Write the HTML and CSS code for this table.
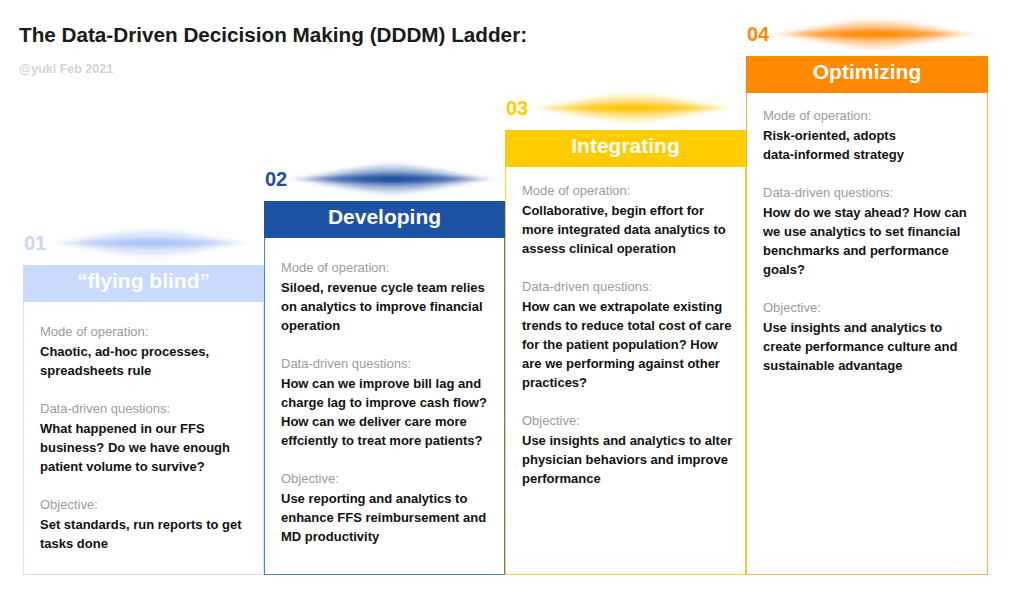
FILE: index.html
```html
<!DOCTYPE html>
<html>
<head>
<meta charset="utf-8">
<link rel="stylesheet" href="styles.css">
</head>
<body>
<svg class="defs" width="0" height="0" aria-hidden="true">
  <defs>
    <filter id="soft" x="-10%" y="-50%" width="120%" height="200%"><feGaussianBlur stdDeviation="1.4"/></filter>
    <filter id="softer" x="-10%" y="-50%" width="120%" height="200%"><feGaussianBlur stdDeviation="2.5"/></filter>
    <radialGradient id="g1"><stop offset="0" stop-color="#a9c2f5" stop-opacity="1"/><stop offset="0.5" stop-color="#a9c2f5" stop-opacity="0.6"/><stop offset="1" stop-color="#a9c2f5" stop-opacity="0"/></radialGradient>
    <radialGradient id="g2"><stop offset="0" stop-color="#16489c" stop-opacity="1"/><stop offset="0.5" stop-color="#16489c" stop-opacity="0.6"/><stop offset="1" stop-color="#16489c" stop-opacity="0"/></radialGradient>
    <radialGradient id="g3"><stop offset="0" stop-color="#ffc400" stop-opacity="1"/><stop offset="0.5" stop-color="#ffc400" stop-opacity="0.6"/><stop offset="1" stop-color="#ffc400" stop-opacity="0"/></radialGradient>
    <radialGradient id="g4"><stop offset="0" stop-color="#ff8400" stop-opacity="1"/><stop offset="0.5" stop-color="#ff8400" stop-opacity="0.6"/><stop offset="1" stop-color="#ff8400" stop-opacity="0"/></radialGradient>
  </defs>
</svg>
<div class="page">
  <header class="intro">
    <h1 class="title">The Data-Driven Decicision Making (DDDM) Ladder:</h1>
    <div class="byline">@yuki Feb 2021</div>
  </header>

  <main class="ladder">
    <section class="step step-1">
      <div class="step-top">
        <span class="num">01</span>
        <svg class="glow" viewBox="0 0 224 44" width="224" height="44"><polygon points="12,22 112,6 212,22 112,38" fill="url(#g1)" opacity="0.75" filter="url(#softer)"/><polygon points="0,22 112,16 224,22 112,28" fill="url(#g1)" filter="url(#soft)"/></svg>
      </div>
      <div class="head">“flying blind”</div>
      <div class="body">
        <div class="sec"><div class="lbl">Mode of operation:</div><p class="txt">Chaotic, ad-hoc processes,<br>spreadsheets rule</p></div>
        <div class="sec"><div class="lbl">Data-driven questions:</div><p class="txt">What happened in our FFS<br>business? Do we have enough<br>patient volume to survive?</p></div>
        <div class="sec"><div class="lbl">Objective:</div><p class="txt">Set standards, run reports to get<br>tasks done</p></div>
      </div>
    </section>

    <section class="step step-2">
      <div class="step-top">
        <span class="num">02</span>
        <svg class="glow" viewBox="0 0 224 44" width="224" height="44"><polygon points="12,22 112,6 212,22 112,38" fill="url(#g2)" opacity="0.75" filter="url(#softer)"/><polygon points="0,22 112,16 224,22 112,28" fill="url(#g2)" filter="url(#soft)"/></svg>
      </div>
      <div class="head">Developing</div>
      <div class="body">
        <div class="sec"><div class="lbl">Mode of operation:</div><p class="txt">Siloed, revenue cycle team relies<br>on analytics to improve financial<br>operation</p></div>
        <div class="sec"><div class="lbl">Data-driven questions:</div><p class="txt">How can we improve bill lag and<br>charge lag to improve cash flow?<br>How can we deliver care more<br>effciently to treat more patients?</p></div>
        <div class="sec"><div class="lbl">Objective:</div><p class="txt">Use reporting and analytics to<br>enhance FFS reimbursement and<br>MD productivity</p></div>
      </div>
    </section>

    <section class="step step-3">
      <div class="step-top">
        <span class="num">03</span>
        <svg class="glow" viewBox="0 0 224 44" width="224" height="44"><polygon points="12,22 112,6 212,22 112,38" fill="url(#g3)" opacity="0.75" filter="url(#softer)"/><polygon points="0,22 112,16 224,22 112,28" fill="url(#g3)" filter="url(#soft)"/></svg>
      </div>
      <div class="head">Integrating</div>
      <div class="body">
        <div class="sec"><div class="lbl">Mode of operation:</div><p class="txt">Collaborative, begin effort for<br>more integrated data analytics to<br>assess clinical operation</p></div>
        <div class="sec"><div class="lbl">Data-driven questions:</div><p class="txt">How can we extrapolate existing<br>trends to reduce total cost of care<br>for the patient population? How<br>are we performing against other<br>practices?</p></div>
        <div class="sec"><div class="lbl">Objective:</div><p class="txt">Use insights and analytics to alter<br>physician behaviors and improve<br>performance</p></div>
      </div>
    </section>

    <section class="step step-4">
      <div class="step-top">
        <span class="num">04</span>
        <svg class="glow" viewBox="0 0 224 44" width="224" height="44"><polygon points="12,22 112,6 212,22 112,38" fill="url(#g4)" opacity="0.75" filter="url(#softer)"/><polygon points="0,22 112,16 224,22 112,28" fill="url(#g4)" filter="url(#soft)"/></svg>
      </div>
      <div class="head">Optimizing</div>
      <div class="body">
        <div class="sec"><div class="lbl">Mode of operation:</div><p class="txt">Risk-oriented, adopts<br>data-informed strategy</p></div>
        <div class="sec"><div class="lbl">Data-driven questions:</div><p class="txt">How do we stay ahead? How can<br>we use analytics to set financial<br>benchmarks and performance<br>goals?</p></div>
        <div class="sec"><div class="lbl">Objective:</div><p class="txt">Use insights and analytics to<br>create performance culture and<br>sustainable advantage</p></div>
      </div>
    </section>
  </main>
</div>
</body>
</html>
```

FILE: styles.css
```css
* { box-sizing: border-box; }

html, body {
  margin: 0;
  padding: 0;
  background: #ffffff;
}

body {
  font-family: "Liberation Sans", Arial, sans-serif;
  color: #111111;
  width: 1030px;
  height: 595px;
  overflow: hidden;
}

.defs {
  position: absolute;
  width: 0;
  height: 0;
}

.page {
  display: grid;
  width: 1030px;
  height: 595px;
}

.intro,
.ladder {
  grid-area: 1 / 1;
}

.intro {
  align-self: start;
  padding: 22px 0 0 19px;
}

.title {
  margin: 0;
  font-size: 20.7px;
  line-height: 25px;
  font-weight: bold;
  color: #1a1a1a;
}

.byline {
  margin-top: 15px;
  font-size: 12.5px;
  line-height: 14px;
  font-weight: bold;
  color: #d4d4d4;
}

.ladder {
  align-self: end;
  display: flex;
  align-items: flex-end;
  padding: 0 0 20px 23px;
}

.step {
  width: 241px;
  display: flex;
  flex-direction: column;
}

.step-4 { width: 242px; }

.step-top {
  height: 44px;
  display: grid;
  align-items: center;
}

.step-top > * {
  grid-area: 1 / 1;
}

.num {
  justify-self: start;
  font-size: 20px;
  line-height: 24px;
  font-weight: bold;
  margin-left: 1px;
  position: relative;
  z-index: 1;
}

.glow {
  justify-self: center;
  display: block;
  margin-left: 14px;
}

.head {
  height: 37px;
  display: flex;
  align-items: center;
  justify-content: center;
  color: #ffffff;
  font-size: 21px;
  font-weight: bold;
  padding-bottom: 5px;
}

.body {
  border: 1px solid;
  border-top: none;
  padding: 20px 10px 0 16px;
}

.sec + .sec {
  margin-top: 19px;
}

.lbl {
  font-size: 13px;
  line-height: 20px;
  color: #9c9c9c;
}

.txt {
  margin: 0;
  font-size: 13px;
  line-height: 19px;
  font-weight: bold;
  color: #111111;
}

/* step colours */
.step-1 .num { color: #c6d7fa; }
.step-1 .head { background: #c9dafc; }
.step-1 .body { border-color: #d7e3fb; height: 273px; }

.step-2 .num { color: #1f4f9f; }
.step-2 .head { background: #1c52a3; }
.step-2 .body { border-color: #4f80cc; height: 337px; }

.step-3 .num { color: #ffcc00; }
.step-3 .head { background: #ffcc00; }
.step-3 .body { border-color: #ffd21f; height: 408px; padding-top: 14px; }

.step-4 .num { color: #ff8a00; }
.step-4 .head { background: #ff8a00; }
.step-4 .body { border-color: #ffac5a; height: 482px; padding-top: 13px; }
.step-4 .step-top { padding-bottom: 3px; }
```
